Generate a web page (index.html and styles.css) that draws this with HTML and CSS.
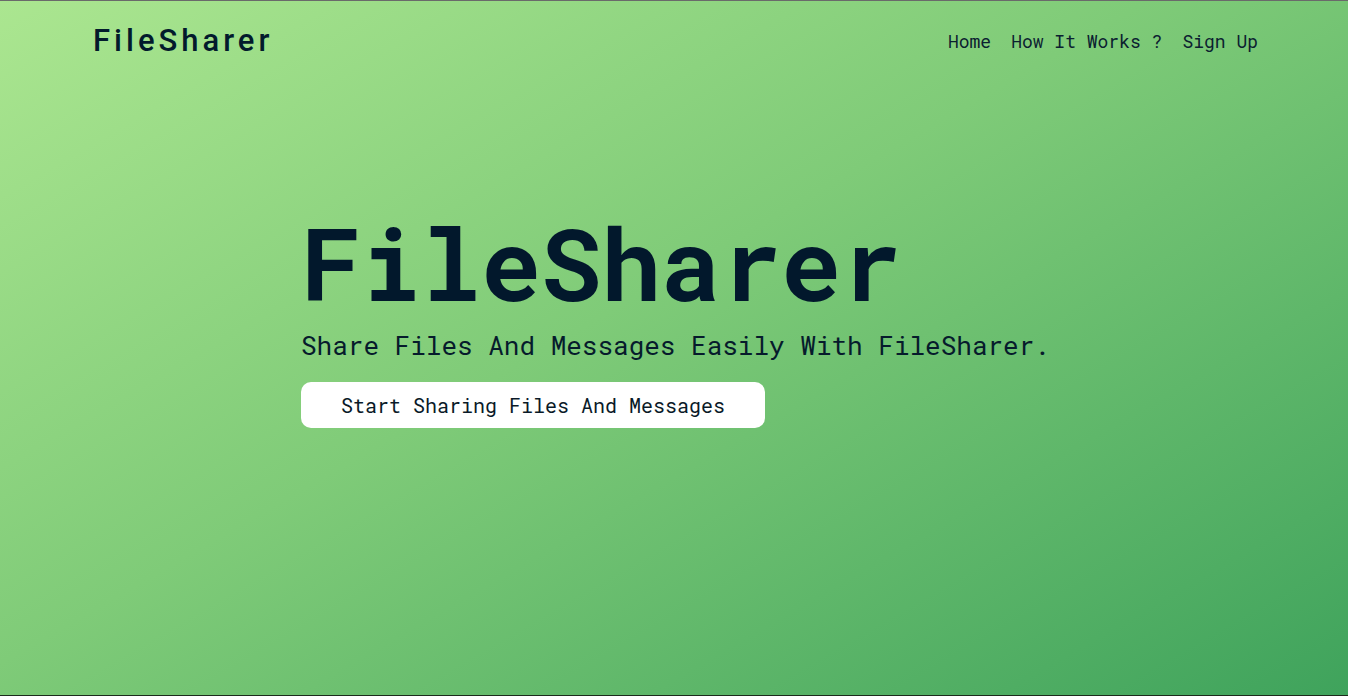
FILE: index.html
```html
<!DOCTYPE html>
<html lang="en">
<head>
<meta charset="utf-8">
<title>FileSharer</title>
<link rel="stylesheet" href="styles.css">
</head>
<body>
<div class="page">
  <header class="nav">
    <div class="logo">FileSharer</div>
    <nav class="links">
      <a class="link" href="#">Home</a>
      <a class="link" href="#">How It Works ?</a>
      <a class="link" href="#">Sign Up</a>
    </nav>
  </header>
  <main class="hero">
    <h1 class="title">FileSharer</h1>
    <p class="subtitle">Share Files And Messages Easily With FileSharer.</p>
    <a class="cta" href="#">Start Sharing Files And Messages</a>
  </main>
</div>
</body>
</html>
```

FILE: styles.css
```css
html, body {
  margin: 0;
  padding: 0;
}
body {
  font-family: "Roboto Mono", "DejaVu Sans Mono", monospace;
  color: #021a2c;
}
.page {
  height: 696px;
  box-sizing: border-box;
  border-top: 1px solid #6a6a6a;
  border-bottom: 1px solid #1c2a1c;
  background: linear-gradient(150deg, #abe690 0%, #7fcb78 45%, #3fa35c 100%);
  display: flex;
  flex-direction: column;
}
.nav {
  height: 79px;
  padding: 0 90px 0 93px;
  display: flex;
  justify-content: space-between;
  align-items: center;
}
.logo {
  font-family: Roboto, "Liberation Sans", sans-serif;
  font-size: 31px;
  line-height: 40px;
  letter-spacing: 4px;
  font-weight: 500;
  color: #021a2c;
}
.links {
  display: flex;
  gap: 20px;
}
.link {
  font-size: 18px;
  line-height: 24px;
  color: #0b2030;
  text-decoration: none;
}
.hero {
  padding: 132px 0 0 301px;
  display: flex;
  flex-direction: column;
  align-items: flex-start;
}
.title {
  margin: 0;
  font-size: 100px;
  line-height: 100px;
  font-weight: 700;
  color: #02182c;
}
.subtitle {
  margin: 18px 0 0 0;
  font-size: 26px;
  line-height: 30px;
  color: #061b2c;
}
.cta {
  display: inline-block;
  white-space: nowrap;
  margin-top: 22px;
  height: 46px;
  line-height: 46px;
  padding: 0 40px;
  background: #ffffff;
  border-radius: 10px;
  font-size: 20px;
  color: #0a1a28;
  text-decoration: none;
}
```
